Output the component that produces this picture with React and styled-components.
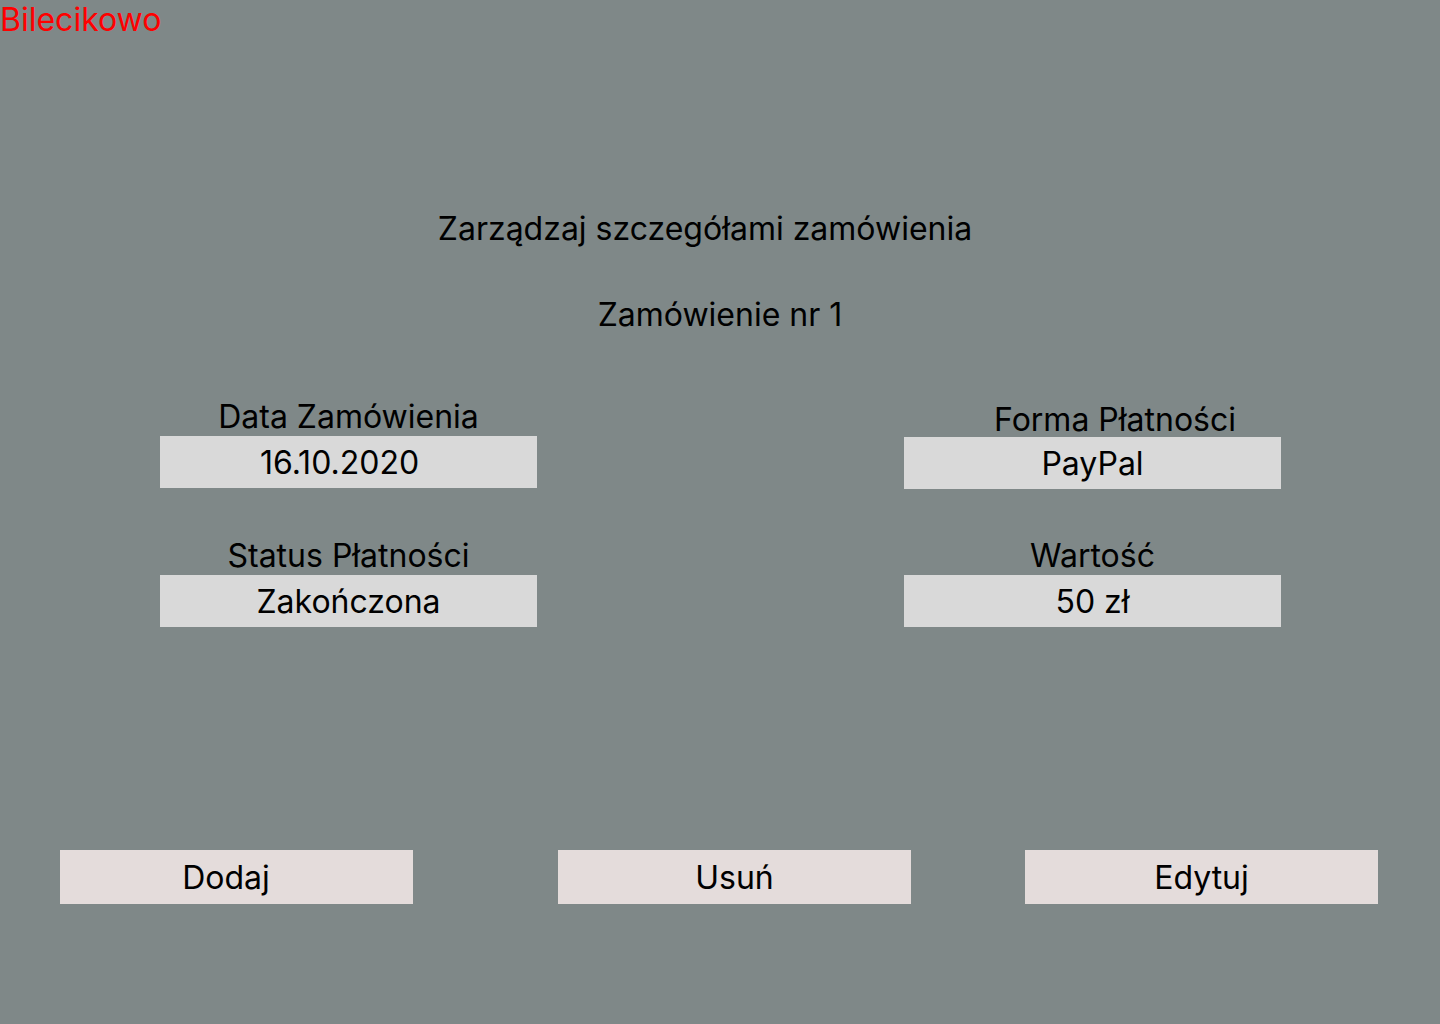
import React from "react";
import styled, { createGlobalStyle } from "styled-components";

const Global = createGlobalStyle`
  html, body { margin: 0; padding: 0; }
  body {
    background: #7f8888;
    font-family: Inter, "Noto Sans", sans-serif;
    color: #000;
  }
`;

const Page = styled.div`
  width: 1440px;
  height: 1024px;
  background: #7f8888;
  display: flex;
  flex-direction: column;
`;

const Brand = styled.div`
  color: #ff0000;
  font-size: 32px;
  line-height: 40px;
  height: 40px;
`;

const Title = styled.h1`
  margin: 171px 0 0;
  font-weight: 400;
  font-size: 32px;
  line-height: 36px;
  text-align: center;
  padding-right: ${(p) => p.$shift || 0}px;
`;

const Subtitle = styled.h2`
  margin: 50px 0 0;
  font-weight: 400;
  font-size: 32px;
  line-height: 36px;
  text-align: center;
`;

const FieldGrid = styled.div`
  margin-top: 65px;
  padding-left: 160px;
  display: grid;
  grid-template-columns: 377px 377px;
  column-gap: 367px;
  row-gap: 49px;
`;

const Field = styled.div`
  display: flex;
  flex-direction: column;
  margin-top: ${(p) => p.$drop || 0}px;
  margin-bottom: ${(p) => -(p.$drop || 0)}px;
`;

const Label = styled.div`
  font-size: 32px;
  line-height: 36px;
  text-align: center;
  margin-top: ${(p) => 1 + (p.$nudge || 0)}px;
  margin-bottom: ${(p) => 1 - (p.$nudge || 0)}px;
`;

const LabelText = styled.span`
  display: inline-block;
  padding-left: ${(p) => p.$indent || 0}px;
`;

const Value = styled.div`
  height: 52px;
  background: #d9d9d9;
  display: flex;
  align-items: center;
  justify-content: center;
  font-size: 32px;
  padding-right: ${(p) => p.$shift || 0}px;
`;

const Actions = styled.div`
  margin-top: 223px;
  display: flex;
`;

const ActionButton = styled.button`
  margin-left: ${(p) => p.$offset}px;
  width: 353px;
  height: 54px;
  border: none;
  padding: 0 ${(p) => p.$shift || 0}px 0 0;
  background: #e4dcdb;
  font-family: Inter, "Noto Sans", sans-serif;
  font-size: 32px;
  color: #000;
`;

const fields = [
  { label: "Data Zamówienia", value: "16.10.2020", shift: 18 },
  { label: "Forma Płatności", value: "PayPal", drop: 1, nudge: 2, indent: 45 },
  { label: "Status Płatności", value: "Zakończona" },
  { label: "Wartość", value: "50 zł" },
];

export default function App() {
  return (
    <Page>
      <Global />
      <Brand>Bilecikowo</Brand>
      <Title $shift={30}>Zarządzaj szczegółami zamówienia</Title>
      <Subtitle>Zamówienie nr 1</Subtitle>
      <FieldGrid>
        {fields.map((f) => (
          <Field key={f.label} $drop={f.drop}>
            <Label $nudge={f.nudge}>
              <LabelText $indent={f.indent}>{f.label}</LabelText>
            </Label>
            <Value $shift={f.shift}>{f.value}</Value>
          </Field>
        ))}
      </FieldGrid>
      <Actions>
        <ActionButton $offset={60} $shift={21}>Dodaj</ActionButton>
        <ActionButton $offset={145}>Usuń</ActionButton>
        <ActionButton $offset={114}>Edytuj</ActionButton>
      </Actions>
    </Page>
  );
}
